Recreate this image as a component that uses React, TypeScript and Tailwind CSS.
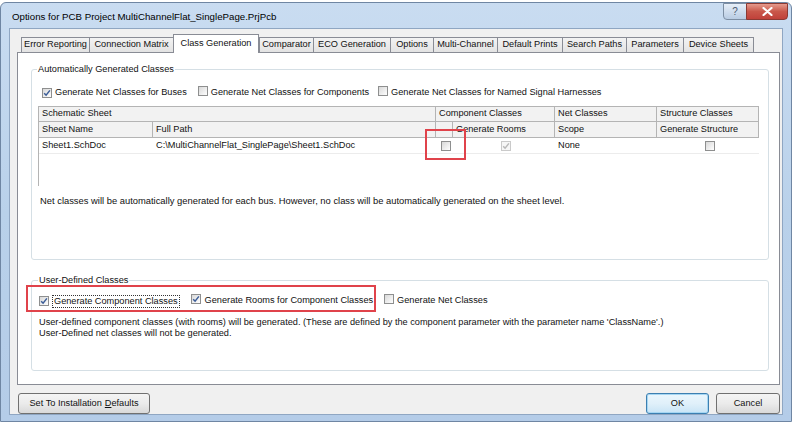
import React from "react";

function Check({ checked = false, disabled = false }: { checked?: boolean; disabled?: boolean }) {
  return (
    <span
      className={`inline-flex h-[10px] w-[10px] shrink-0 items-center justify-center border ${
        disabled
          ? "border-[#cacaca] bg-[#f6f6f6]"
          : "border-[#8e8f8f] bg-gradient-to-br from-[#d8d8d8] to-[#ffffff]"
      }`}
    >
      {checked && (
        <svg width="8" height="8" viewBox="0 0 8 8">
          <path
            d="M1.2 4.2 L3.1 6.2 L6.9 1.4"
            fill="none"
            stroke={disabled ? "#b8b8b8" : "#3a5c97"}
            strokeWidth="1.5"
          />
        </svg>
      )}
    </span>
  );
}

const tabs: { label: string; w: string; sel?: boolean }[] = [
  { label: "Error Reporting", w: "w-[69px]" },
  { label: "Connection Matrix", w: "w-[85px]" },
  { label: "Class Generation", w: "w-[86px]", sel: true },
  { label: "Comparator", w: "w-[55px]" },
  { label: "ECO Generation", w: "w-[78px]" },
  { label: "Options", w: "w-[44px]" },
  { label: "Multi-Channel", w: "w-[65px]" },
  { label: "Default Prints", w: "w-[66px]" },
  { label: "Search Paths", w: "w-[65px]" },
  { label: "Parameters", w: "w-[58px]" },
  { label: "Device Sheets", w: "w-[71px]" },
];

const hdr = "flex items-center border-r border-b border-[#b4b4b4] bg-[#f2f2f2] pl-[3px] whitespace-nowrap";
const cell = "flex items-center border-b border-[#ececec] bg-white pl-[3px] whitespace-nowrap";

export default function App() {
  return (
    <div className="h-[427px] w-[800px] overflow-hidden bg-white font-['Liberation_Sans',Arial,sans-serif] text-[9.2px] text-[#111]">
      <div className="mt-[2px] flex h-[420px] w-[792px] flex-col rounded-t-[6px] border border-[#6f86a3] bg-gradient-to-b from-[#c9dcf1] via-[#b9d1ea] to-[#b4cce8]">
        {/* Title bar */}
        <div className="flex h-[25px] shrink-0 items-start justify-between">
          <div className="ml-[11px] mt-[7px] text-[9.7px] leading-[13px] text-black">
            Options for PCB Project MultiChannelFlat_SinglePage.PrjPcb
          </div>
          <div className="mr-[3px] flex">
            <div className="flex h-[17px] w-[24px] items-center justify-center rounded-bl-[4px] border border-[#7d8ea3] bg-gradient-to-b from-[#e6eef8] to-[#b9cce3] text-[10px] leading-none text-[#4d5c70]">
              ?
            </div>
            <div className="-ml-px flex h-[17px] w-[42px] items-center justify-center rounded-br-[4px] border border-[#8b3a33] bg-gradient-to-b from-[#e59a8d] via-[#c9574a] to-[#c0413a]">
              <svg width="11" height="9" viewBox="0 0 11 9">
                <path d="M1.5 1 L9.5 8 M9.5 1 L1.5 8" stroke="white" strokeWidth="2.2" strokeLinecap="round" />
              </svg>
            </div>
          </div>
        </div>

        {/* Body */}
        <div className="mx-[8px] mb-[8px] flex flex-1 flex-col border border-[#8fa6c2] bg-[#f0f0f0] pl-[7px] pr-[2px] pt-[5px]">
          {/* Tabs */}
          <div className="ml-[4px] flex h-[18px] items-end">
            {tabs.map((t) =>
              t.sel ? (
                <div
                  key={t.label}
                  className={`${t.w} relative z-10 -mb-px flex h-[19px] items-center justify-center border border-b-0 border-[#898c95] bg-white pb-[1px] whitespace-nowrap`}
                >
                  {t.label}
                </div>
              ) : (
                <div
                  key={t.label}
                  className={`${t.w} -mr-px flex h-[15px] items-center justify-center border border-b-0 border-[#898c95] bg-gradient-to-b from-[#f3f3f3] to-[#e3e3e3] whitespace-nowrap`}
                >
                  {t.label}
                </div>
              )
            )}
          </div>

          {/* Panel */}
          <div className="flex h-[333px] flex-col border border-[#898c95] bg-white pl-[13px] pr-[10px]">
            {/* Group 1 */}
            <div className="mt-[16px] flex h-[191px] flex-col rounded-[3px] border border-[#d5dfe5] pl-[6px] pr-[9px]">
              <div className="-mt-[7px] ml-[-1px] h-[13px] w-fit bg-white px-[1px] leading-[13px]">
                Automatically Generated Classes
              </div>
              <div className="ml-[4px] mt-[10px] flex h-[14px] items-center">
                <Check checked />
                <span className="ml-[3px]">Generate Net Classes for Buses</span>
                <span className="ml-[11px]"><Check /></span>
                <span className="ml-[3px]">Generate Net Classes for Components</span>
                <span className="ml-[9px]"><Check /></span>
                <span className="ml-[3px]">Generate Net Classes for Named Signal Harnesses</span>
              </div>

              {/* Table */}
              <div className="relative mt-[6px] flex h-[80px] w-[721px] flex-col border-l border-t border-[#b4b4b4]">
                <div className="grid grid-cols-[114px_283px_17px_102px_102px_102px] grid-rows-[15px_16px_16px]">
                  <div className={`${hdr} col-span-2`}>Schematic Sheet</div>
                  <div className={`${hdr} col-span-2`}>Component Classes</div>
                  <div className={hdr}>Net Classes</div>
                  <div className={hdr}>Structure Classes</div>

                  <div className={hdr}>Sheet Name</div>
                  <div className={hdr}>Full Path</div>
                  <div className={hdr}></div>
                  <div className={hdr}>Generate Rooms</div>
                  <div className={hdr}>Scope</div>
                  <div className={hdr}>Generate Structure</div>

                  <div className={cell}>Sheet1.SchDoc</div>
                  <div className={cell}>C:\MultiChannelFlat_SinglePage\Sheet1.SchDoc</div>
                  <div className={`${cell} justify-center pl-0`}><Check /></div>
                  <div className={`${cell} justify-center pl-0`}><Check checked disabled /></div>
                  <div className={cell}>None</div>
                  <div className={`${cell} justify-center pl-0`}><Check /></div>
                </div>
                <div className="absolute left-[386px] top-[22px] h-[31px] w-[41px] border-2 border-[#e0434b]" />
              </div>

              <div className="ml-[2px] mt-[9px] h-[12px] text-[9.38px] leading-[12px]">
                Net classes will be automatically generated for each bus. However, no class will be automatically generated on the sheet level.
              </div>
            </div>

            {/* Group 2 */}
            <div className="relative mt-[20px] flex h-[91px] flex-col rounded-[3px] border border-[#d5dfe5] pl-[6px] pr-[9px]">
              <div className="-mt-[7px] ml-[0px] h-[13px] w-fit bg-white px-[1px] leading-[13px]">
                User-Defined Classes
              </div>
              <div className="ml-[1px] mt-[7px] flex h-[14px] items-center">
                <Check checked />
                <span className="ml-[3px] border border-dotted border-[#333] px-[1px] leading-[11px]">
                  Generate Component Classes
                </span>
                <span className="ml-[11px]"><Check checked /></span>
                <span className="ml-[4px]">Generate Rooms for Component Classes</span>
                <span className="ml-[11px]"><Check /></span>
                <span className="ml-[3px]">Generate Net Classes</span>
              </div>
              <div className="ml-[1px] mt-[9px] leading-[11px]">
                <div>
                  User-defined component classes (with rooms) will be generated. (These are defined by the component parameter with the parameter name &apos;ClassName&apos;.)
                </div>
                <div>User-Defined net classes will not be generated.</div>
              </div>
              <div className="absolute left-[-6px] top-[4px] h-[27px] w-[350px] border-2 border-[#e0434b]" />
            </div>
          </div>

          {/* Buttons */}
          <div className="mt-[8px] flex h-[21px] items-start justify-between">
            <div className="ml-[1px] flex h-[21px] w-[132px] items-center justify-center rounded-[3px] border border-[#707070] bg-gradient-to-b from-[#f4f4f4] via-[#ebebeb] to-[#d9d9d9]">
              Set To Installation <span className="ml-[3px] underline">D</span>efaults
            </div>
            <div className="flex gap-[7px]">
              <div className="flex h-[21px] w-[63px] items-center justify-center rounded-[3px] border border-[#3c7fb1] bg-gradient-to-b from-[#eaf6fd] via-[#e0f0fa] to-[#c8e4f6] shadow-[inset_0_0_0_1px_#a6d6f2]">
                OK
              </div>
              <div className="flex h-[21px] w-[64px] items-center justify-center rounded-[3px] border border-[#707070] bg-gradient-to-b from-[#f4f4f4] via-[#ebebeb] to-[#d9d9d9]">
                Cancel
              </div>
            </div>
          </div>
        </div>
      </div>
    </div>
  );
}
